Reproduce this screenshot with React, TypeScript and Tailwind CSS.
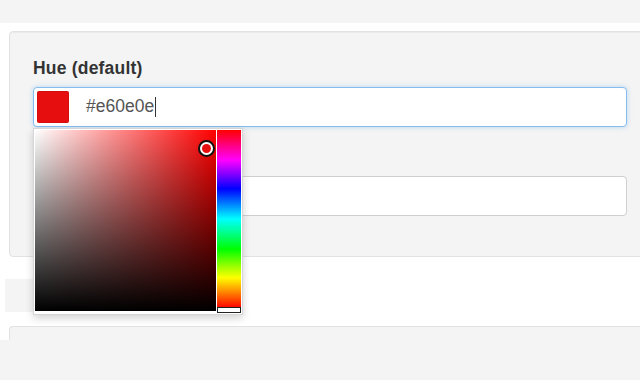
const hueStops =
  'linear-gradient(to bottom, #ff0000 0%, #ff00ff 17%, #0000ff 33%, #00ffff 50%, #00ff00 67%, #ffff00 83%, #ff0000 100%)';

const ColorPicker = () => {
  return (
    <div className="absolute left-0 top-[41px] z-10 flex gap-px border border-[#d6d6d6] bg-white p-px shadow-[0_3px_8px_rgba(0,0,0,0.18)]">
      {/* saturation / value square */}
      <div className="relative h-[181px] w-[181px] bg-[#ff0000]">
        <div className="absolute inset-0 bg-gradient-to-r from-white to-transparent" />
        <div className="absolute inset-0 bg-gradient-to-b from-transparent to-black" />
        <div className="absolute left-[163px] top-[10px] h-[17px] w-[17px] rounded-full border-2 border-[#111] bg-white p-[2px]">
          <div className="h-full w-full rounded-full bg-[#e60e0e]" />
        </div>
      </div>
      {/* hue bar */}
      <div className="relative h-[183px] w-[24px]">
        <div className="h-[178px] w-full" style={{ backgroundImage: hueStops }} />
        <div className="absolute bottom-0 left-0 h-[6px] w-full border border-[#222] bg-white" />
      </div>
    </div>
  );
};

export default function App() {
  return (
    <div className="h-[380px] w-[640px] overflow-hidden bg-white font-['Liberation_Sans',Arial,sans-serif] text-[#333]">
      <div className="h-[23px] bg-[#f4f4f4]" />

      {/* ── Form card ─────────────────────────────────────────── */}
      <div className="ml-[9px] mt-[8px] h-[226px] w-[700px] rounded-l-[4px] border border-[#e2e2e2] bg-[#f4f4f4] px-[23px] pt-[26px] shadow-[inset_0_1px_1px_rgba(0,0,0,0.04)]">
        <label className="block h-[20px] text-[17.5px] font-bold leading-[20px] tracking-[0.2px] text-[#333]">Hue (default)</label>
        <div className="relative mt-[9px] w-[594px]">
          <div className="flex h-[40px] items-center rounded-[4px] border border-[#86bdee] bg-white pl-[3px] shadow-[0_0_5px_rgba(102,175,233,0.45)]">
            <div className="h-[32px] w-[32px] rounded-[2px] bg-[#e60e0e] shadow-[inset_0_0_0_1px_rgba(0,0,0,0.08)]" />
            <span className="ml-[17px] text-[17.5px] leading-none text-[#555]">#e60e0e</span>
            <span className="ml-px h-[20px] w-px bg-[#333]" />
          </div>
          <ColorPicker />
        </div>
        <div className="mt-[49px] h-[40px] w-[594px] rounded-[4px] border border-[#cfcfcf] bg-white" />
      </div>

      <div className="ml-[5px] mt-[22px] h-[33px] w-[200px] bg-[#f4f4f4]" />

      <div className="ml-[9px] mt-[14px] h-[14px] rounded-tl-[4px] border-l border-t border-[#e2e2e2] bg-[#f4f4f4]" />
      <div className="h-[40px] bg-[#f4f4f4]" />
    </div>
  );
}
